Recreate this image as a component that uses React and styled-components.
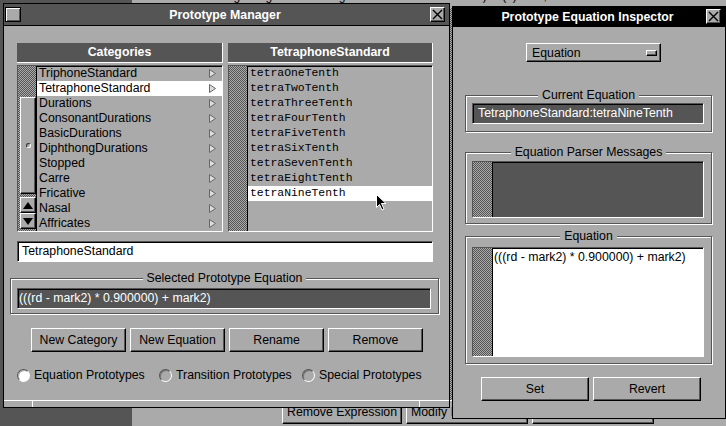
import React from "react";
import styled, { createGlobalStyle, css } from "styled-components";

const SANS = `"Liberation Sans", Arial, sans-serif`;
const MONO = `"Liberation Mono", "Courier New", monospace`;

const GlobalStyle = createGlobalStyle`
  html, body { margin: 0; padding: 0; background: #aaa; }
  body { font-family: ${SANS}; font-size: 12.3px; color: #000; overflow: hidden; }
  * { box-sizing: border-box; }
`;

// NeXT-ish helpers
const checker = css`
  background-color: #aaa;
  background-image: repeating-conic-gradient(#555 0 25%, #aaa 0 50%);
  background-size: 2px 2px;
`;

const raised = css`
  border: 1px solid;
  border-color: #fff #000 #000 #fff;
  box-shadow: inset -1px -1px 0 #555;
  background: #aaa;
`;

const sunken = css`
  border: 1px solid;
  border-color: #555 #fff #fff #555;
  box-shadow: inset 1px 1px 0 #000;
`;

const Desktop = styled.div`
  position: relative;
  width: 726px;
  height: 426px;
  overflow: hidden;
  background: #aaa;
`;

/* ---------- stuff behind the two panels ---------- */
const Backdrop = styled.div`
  position: absolute;
  inset: 0;
  display: grid;
  grid-template-columns: 132px 1fr;
`;
const BackShelf = styled.div`
  background: #555;
`;
const BackPane = styled.div`
  position: relative;
  display: flex;
  flex-direction: column;
`;
const BackText = styled.div`
  margin-top: -11px;
  padding-left: 6px;
  font-size: 12px;
  line-height: 14px;
  white-space: nowrap;
  overflow: hidden;
`;
const BackSeam = styled.div`
  position: absolute;
  left: 314px;
  top: 8px;
  width: 10px;
  height: 392px;
  ${checker}
`;
const BackButtons = styled.div`
  margin-top: auto;
  height: 26px;
  display: flex;
  gap: 4px;
  padding-left: 150px;
`;
const BackButton = styled.div`
  ${raised}
  flex: none;
  width: ${(p) => p.$w}px;
  height: 24px;
  line-height: 22px;
  padding-left: 4px;
  white-space: nowrap;
  overflow: hidden;
`;

/* ---------- windows ---------- */
const Window = styled.section`
  position: absolute;
  left: ${(p) => p.$x}px;
  top: ${(p) => p.$y}px;
  width: ${(p) => p.$w}px;
  height: ${(p) => p.$h}px;
  border: 1px solid #000;
  background: #aaa;
  display: flex;
  flex-direction: column;
`;
const TitleBar = styled.header`
  flex: none;
  height: ${(p) => p.$h + 1}px;
  border-bottom: 1px solid #000;
  background: ${(p) => (p.$key ? "#000" : "#555")};
  display: grid;
  grid-template-columns: 16px 1fr 16px;
  align-items: center;
  padding: 0 4px 0 1px;
  color: #fff;
  font-weight: bold;
  font-size: 12.3px;
`;
const Title = styled.span`
  text-align: center;
  white-space: nowrap;
`;
const MiniBox = styled.span`
  width: 16px;
  height: 15px;
  border: 1px solid #000;
  background: #aaa;
  box-shadow: inset 1px 1px 0 #fff, inset -1px -1px 0 #555;
`;
const CloseBox = styled.span`
  ${raised}
  justify-self: end;
  width: 15px;
  height: 15px;
  display: flex;
  align-items: center;
  justify-content: center;
`;
const Body = styled.div`
  flex: 1;
  display: flex;
  flex-direction: column;
`;

/* ---------- browser lists ---------- */
const Lists = styled.div`
  display: flex;
  gap: 5px;
  margin: 17px 0 0 13px;
`;
const ListColumn = styled.div`
  width: ${(p) => p.$w}px;
  display: flex;
  flex-direction: column;
  gap: 2px;
`;
const ColumnHeader = styled.div`
  height: 20px;
  background: #555;
  border-right: 1px solid #fff;
  border-bottom: 1px solid #fff;
  color: #fff;
  font-weight: bold;
  text-align: center;
  line-height: 19px;
`;
const ListBox = styled.div`
  ${sunken}
  height: 167px;
  display: flex;
`;
const Scroller = styled.div`
  flex: none;
  width: 19px;
  border-right: 1px solid #000;
  ${checker}
  display: flex;
  flex-direction: column;
  padding: 0 0 2px 2px;
`;
const Knob = styled.div`
  ${raised}
  margin-top: ${(p) => p.$top}px;
  height: ${(p) => p.$h}px;
  display: flex;
  align-items: center;
  justify-content: center;
`;
const Dimple = styled.span`
  width: 5px;
  height: 5px;
  border-radius: 50%;
  border: 1px solid;
  border-color: #333 #fff #fff #333;
`;
const ArrowButton = styled.div`
  ${raised}
  height: 16px;
  display: flex;
  align-items: center;
  justify-content: center;
  margin-top: ${(p) => (p.$first ? "auto" : "0")};
`;
const Rows = styled.div`
  flex: 1;
  display: flex;
  flex-direction: column;
`;
const Row = styled.div`
  height: 15px;
  line-height: 15px;
  flex: none;
  display: flex;
  align-items: center;
  justify-content: space-between;
  padding: 0 6px 0 2px;
  background: ${(p) => (p.$sel ? "#fff" : "transparent")};
  font-family: ${(p) => (p.$mono ? MONO : SANS)};
  font-size: ${(p) => (p.$mono ? "11.4px" : "12.3px")};
  white-space: nowrap;
`;

/* ---------- fields ---------- */
const Field = styled.div`
  ${sunken}
  height: ${(p) => p.$h || 21}px;
  background: ${(p) => (p.$dark ? "#555" : "#fff")};
  color: ${(p) => (p.$dark ? "#fff" : "#000")};
  padding-left: ${(p) => p.$pad}px;
  line-height: 19px;
  white-space: nowrap;
  overflow: hidden;
`;
const NameField = styled(Field)`
  margin: 9px 0 0 13px;
  width: 416px;
`;
const TextArea = styled.div`
  ${sunken}
  height: ${(p) => p.$h}px;
  display: flex;
  background: ${(p) => (p.$dark ? "#555" : "#fff")};
`;
const AreaScroller = styled.div`
  flex: none;
  width: 20px;
  border-right: 1px solid #000;
  ${checker}
`;
const AreaText = styled.div`
  padding: 2px 0 0 1px;
  line-height: 14px;
  white-space: nowrap;
`;

const Group = styled.div`
  position: relative;
  margin: ${(p) => p.$mt}px 0 0 ${(p) => p.$ml}px;
  width: ${(p) => p.$w}px;
  padding: ${(p) => p.$pt}px 7px ${(p) => p.$pb}px 6px;
  border: 1px solid #555;
  box-shadow: inset 1px 1px 0 #fff, 1px 1px 0 #fff;
`;
const GroupTitle = styled.div`
  position: absolute;
  left: 0;
  right: 0;
  top: -8px;
  display: flex;
  justify-content: center;
  line-height: 14px;
`;
const GroupTitleText = styled.span`
  background: #aaa;
  padding: 0 4px;
`;

/* ---------- buttons & radios ---------- */
const ButtonRow = styled.div`
  display: flex;
  gap: 4px;
  margin: ${(p) => p.$mt}px 0 0 ${(p) => p.$ml}px;
`;
const Button = styled.div`
  ${raised}
  width: ${(p) => p.$w}px;
  height: 24px;
  line-height: 22px;
  text-align: center;
  white-space: nowrap;
`;
const RadioRow = styled.div`
  display: flex;
  align-items: center;
  height: 14px;
  margin: 16px 0 0 13px;
`;
const RadioItem = styled.label`
  display: flex;
  align-items: center;
  gap: 4px;
  width: ${(p) => (p.$w ? `${p.$w}px` : "auto")};
  white-space: nowrap;
`;
const RadioDot = styled.span`
  flex: none;
  width: 13px;
  height: 13px;
  border-radius: 50%;
  border: 1px solid;
  border-color: #555 #fff #fff #555;
  background: ${(p) => (p.$on ? "#fff" : "#aaa")};
  box-shadow: inset 1px 1px 0 ${(p) => (p.$on ? "#aaa" : "#777")};
`;
const ResizeBar = styled.footer`
  margin-top: auto;
  height: 7px;
  border-top: 1px solid #fff;
  display: grid;
  grid-template-columns: 29px 387px 1fr;
`;
const ResizeSegment = styled.span`
  border-right: 1px solid #fff;
  &:last-child {
    border-right: none;
  }
`;

/* ---------- inspector bits ---------- */
const PopUp = styled.div`
  ${raised}
  margin: 16px 0 0 73px;
  width: 135px;
  height: 19px;
  display: flex;
  align-items: center;
  justify-content: space-between;
  padding: 0 3px 0 5px;
`;
const PopKnob = styled.span`
  width: 11px;
  height: 6px;
  border: 1px solid;
  border-color: #fff #000 #000 #fff;
  box-shadow: inset -1px -1px 0 #555;
`;

const Pointer = styled.svg`
  position: absolute;
  left: 376px;
  top: 194px;
`;

const XIcon = () => (
  <svg width="11" height="11" viewBox="0 0 11 11">
    <path d="M1 1L10 10M10 1L1 10" stroke="#000" strokeWidth="1.4" />
  </svg>
);

const Branch = () => (
  <svg width="7" height="9" viewBox="0 0 7 9">
    <path d="M0.5 0.5L6.5 4.5L0.5 8.5Z" fill="#ddd" stroke="#666" />
  </svg>
);

const Arrow = ({ down }) => (
  <svg width="10" height="9" viewBox="0 0 10 9">
    <path d={down ? "M0 1H10L5 8Z" : "M0 8H10L5 1Z"} fill="#000" />
  </svg>
);

const categories = [
  "TriphoneStandard",
  "TetraphoneStandard",
  "Durations",
  "ConsonantDurations",
  "BasicDurations",
  "DiphthongDurations",
  "Stopped",
  "Carre",
  "Fricative",
  "Nasal",
  "Affricates",
];

const equations = [
  "tetraOneTenth",
  "tetraTwoTenth",
  "tetraThreeTenth",
  "tetraFourTenth",
  "tetraFiveTenth",
  "tetraSixTenth",
  "tetraSevenTenth",
  "tetraEightTenth",
  "tetraNineTenth",
];

const EXPR = "(((rd - mark2) * 0.900000) + mark2)";

export default function App() {
  return (
    <>
      <GlobalStyle />
      <Desktop>
        <Backdrop>
          <BackShelf />
          <BackPane>
            <BackText>
              ition of rules or beginning or end of segment or answer or silence) ss(1) or tx, ss silence
            </BackText>
            <BackSeam />
            <BackButtons>
              <BackButton $w={120}>Remove Expression</BackButton>
              <BackButton $w={122}>Modify Expression</BackButton>
              <BackButton $w={122}>Add Expression</BackButton>
            </BackButtons>
          </BackPane>
        </Backdrop>

        <Window $x={3} $y={3} $w={447} $h={405}>
          <TitleBar $h={21}>
            <MiniBox />
            <Title>Prototype Manager</Title>
            <CloseBox>
              <XIcon />
            </CloseBox>
          </TitleBar>
          <Body>
            <Lists>
              <ListColumn $w={206}>
                <ColumnHeader>Categories</ColumnHeader>
                <ListBox>
                  <Scroller>
                    <Knob $top={31} $h={97}>
                      <Dimple />
                    </Knob>
                    <ArrowButton $first>
                      <Arrow />
                    </ArrowButton>
                    <ArrowButton>
                      <Arrow down />
                    </ArrowButton>
                  </Scroller>
                  <Rows>
                    {categories.map((c) => (
                      <Row key={c} $sel={c === "TetraphoneStandard"}>
                        <span>{c}</span>
                        <Branch />
                      </Row>
                    ))}
                  </Rows>
                </ListBox>
              </ListColumn>
              <ListColumn $w={205}>
                <ColumnHeader>TetraphoneStandard</ColumnHeader>
                <ListBox>
                  <Scroller />
                  <Rows>
                    {equations.map((e) => (
                      <Row key={e} $mono $sel={e === "tetraNineTenth"}>
                        {e}
                      </Row>
                    ))}
                  </Rows>
                </ListBox>
              </ListColumn>
            </Lists>

            <NameField $pad={4}>TetraphoneStandard</NameField>

            <Group $mt={16} $ml={6} $w={429} $pt={9} $pb={4}>
              <GroupTitle>
                <GroupTitleText>Selected Prototype Equation</GroupTitleText>
              </GroupTitle>
              <Field $dark $pad={1}>
                {EXPR}
              </Field>
            </Group>

            <ButtonRow $mt={14} $ml={27}>
              <Button $w={95}>New Category</Button>
              <Button $w={95}>New Equation</Button>
              <Button $w={95}>Rename</Button>
              <Button $w={95}>Remove</Button>
            </ButtonRow>

            <RadioRow>
              <RadioItem $w={142}>
                <RadioDot $on />
                Equation Prototypes
              </RadioItem>
              <RadioItem $w={143}>
                <RadioDot />
                Transition Prototypes
              </RadioItem>
              <RadioItem>
                <RadioDot />
                Special Prototypes
              </RadioItem>
            </RadioRow>

            <ResizeBar>
              <ResizeSegment />
              <ResizeSegment />
              <ResizeSegment />
            </ResizeBar>
          </Body>
        </Window>

        <Window $x={452} $y={6} $w={274} $h={413}>
          <TitleBar $h={19} $key>
            <span />
            <Title>Prototype Equation Inspector</Title>
            <CloseBox>
              <XIcon />
            </CloseBox>
          </TitleBar>
          <Body>
            <PopUp>
              Equation
              <PopKnob />
            </PopUp>

            <Group $mt={33} $ml={12} $w={247} $pt={7} $pb={7}>
              <GroupTitle>
                <GroupTitleText>Current Equation</GroupTitleText>
              </GroupTitle>
              <Field $dark $pad={5}>
                TetraphoneStandard:tetraNineTenth
              </Field>
            </Group>

            <Group $mt={20} $ml={12} $w={247} $pt={8} $pb={5}>
              <GroupTitle>
                <GroupTitleText>Equation Parser Messages</GroupTitleText>
              </GroupTitle>
              <TextArea $dark $h={57}>
                <AreaScroller />
              </TextArea>
            </Group>

            <Group $mt={12} $ml={12} $w={247} $pt={10} $pb={6}>
              <GroupTitle>
                <GroupTitleText>Equation</GroupTitleText>
              </GroupTitle>
              <TextArea $h={110}>
                <AreaScroller />
                <AreaText>{EXPR}</AreaText>
              </TextArea>
            </Group>

            <ButtonRow $mt={13} $ml={28}>
              <Button $w={108}>Set</Button>
              <Button $w={108}>Revert</Button>
            </ButtonRow>
          </Body>
        </Window>

        <Pointer width="11" height="17" viewBox="0 0 11 17">
          <path
            d="M0.5 0.5V13.5L3.5 10.5L6 16L8 15L5.5 9.5H10Z"
            fill="#000"
            stroke="#fff"
          />
        </Pointer>
      </Desktop>
    </>
  );
}
